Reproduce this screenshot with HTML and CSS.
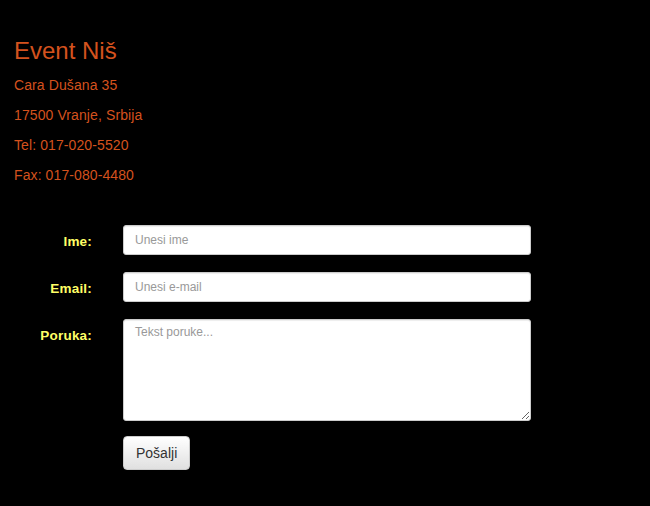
FILE: index.html
```html
<!DOCTYPE html>
<html lang="sr">
<head>
<meta charset="utf-8">
<title>Event Niš - Kontakt</title>
<link rel="stylesheet" href="styles.css">
</head>
<body>
<div class="page">
  <section class="contact-info">
    <h1 class="title">Event Niš</h1>
    <p class="info-line">Cara Dušana 35</p>
    <p class="info-line">17500 Vranje, Srbija</p>
    <p class="info-line">Tel: 017-020-5520</p>
    <p class="info-line">Fax: 017-080-4480</p>
  </section>
  <form class="contact-form">
    <label class="form-label" for="ime">Ime:</label>
    <input class="form-input" id="ime" type="text" placeholder="Unesi ime">
    <label class="form-label" for="email">Email:</label>
    <input class="form-input" id="email" type="email" placeholder="Unesi e-mail">
    <label class="form-label" for="poruka">Poruka:</label>
    <textarea class="form-input form-textarea" id="poruka" placeholder="Tekst poruke..."></textarea>
    <span></span>
    <div class="form-actions"><button class="btn" type="button">Pošalji</button></div>
  </form>
</div>
</body>
</html>
```
FILE: styles.css
```css
html, body {
  margin: 0;
  padding: 0;
  background: #000;
}
body {
  font-family: "Liberation Sans", Arial, sans-serif;
}
.page {
  padding: 36px 0 0 14px;
}
.title {
  margin: 0 0 9px;
  font-size: 24px;
  line-height: 30px;
  font-weight: normal;
  color: #d4521e;
}
.info-line {
  margin: 0 0 10px;
  font-size: 14px;
  line-height: 20px;
  color: #d4521e;
  letter-spacing: 0.1px;
}
.contact-form {
  display: grid;
  grid-template-columns: 78px 408px;
  column-gap: 31px;
  row-gap: 17px;
  margin-top: 40px;
}
.form-label {
  text-align: right;
  font-size: 13.5px;
  line-height: 15px;
  font-weight: bold;
  color: #ffff66;
  padding-top: 9px;
  letter-spacing: 0.2px;
}
.form-input {
  box-sizing: border-box;
  height: 30px;
  width: 408px;
  margin: 0;
  padding: 5px 11px;
  font-family: "Liberation Sans", Arial, sans-serif;
  font-size: 12px;
  color: #555;
  background: #fff;
  border: 1px solid #ccc;
  border-radius: 3px;
  box-shadow: inset 0 1px 1px rgba(0,0,0,0.075);
}
.form-input::placeholder {
  color: #999;
}
.form-textarea {
  height: 102px;
  resize: vertical;
  display: block;
}
.form-actions {
  margin-top: -2px;
}
.btn {
  box-sizing: border-box;
  height: 34px;
  padding: 6px 12px;
  font-family: "Liberation Sans", Arial, sans-serif;
  font-size: 14px;
  line-height: 20px;
  color: #333;
  background: linear-gradient(to bottom, #fff 0%, #e0e0e0 100%);
  border: 1px solid #ccc;
  border-radius: 4px;
  box-shadow: inset 0 1px 0 rgba(255,255,255,0.15), 0 1px 1px rgba(0,0,0,0.075);
}
```
